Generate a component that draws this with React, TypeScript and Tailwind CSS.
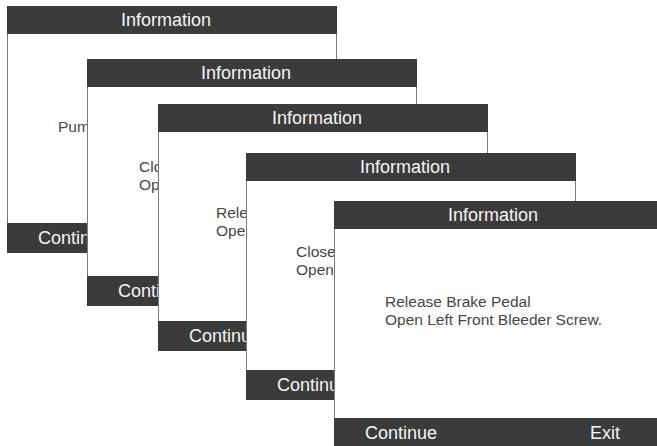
import React from "react";

type Screen = {
  pos: string;
  body: string;
  lines: string[];
  exit?: boolean;
};

// each card sits on a free canvas, so the stack is placed with offsets
const SCREENS: Screen[] = [
  {
    pos: "left-[7px] top-[6px]",
    body: "pl-[50px] pt-[84px]",
    lines: ["Pump Brake Pedal 3 Times."],
  },
  {
    pos: "left-[87px] top-[59px]",
    body: "pl-[51px] pt-[71px]",
    lines: ["Close Left Front Bleeder Screw.", "Open Right Rear Bleeder Screw."],
  },
  {
    pos: "left-[158px] top-[104px]",
    body: "pl-[57px] pt-[72px]",
    lines: ["Release Brake Pedal", "Open Right Rear Bleeder Screw."],
  },
  {
    pos: "left-[246px] top-[153px]",
    body: "pl-[49px] pt-[62px]",
    lines: ["Close Right Rear Bleeder Screw.", "Open Left Front Bleeder Screw."],
  },
  {
    pos: "left-[334px] top-[201px]",
    body: "pl-[50px] pt-[64px]",
    lines: ["Release Brake Pedal", "Open Left Front Bleeder Screw."],
    exit: true,
  },
];

function InfoScreen({ s }: { s: Screen }) {
  return (
    <div
      className={`absolute ${s.pos} w-[330px] h-[247px] flex flex-col bg-white`}
    >
      <div className="h-[28px] shrink-0 bg-[#3b3b3b] flex items-center justify-center pr-3 text-[18px] text-[#f5f5f5] leading-none">
        Information
      </div>
      <div
        className={`flex-1 border-x border-[#7a7a7a] ${s.body} text-[15.5px] leading-[18px] text-[#464646]`}
      >
        {s.lines.map((l) => (
          <div key={l} className="whitespace-nowrap">
            {l}
          </div>
        ))}
      </div>
      <div className="h-[30px] shrink-0 bg-[#3b3b3b] flex items-center justify-between pl-[31px] pr-[44px] text-[18px] text-[#f5f5f5] leading-none">
        <span>Continue</span>
        {s.exit && <span>Exit</span>}
      </div>
    </div>
  );
}

export default function App() {
  return (
    <div className="relative w-[657px] h-[446px] overflow-hidden bg-white font-['Liberation_Sans',Arial,sans-serif]">
      {SCREENS.map((s, i) => (
        <InfoScreen key={i} s={s} />
      ))}
    </div>
  );
}
